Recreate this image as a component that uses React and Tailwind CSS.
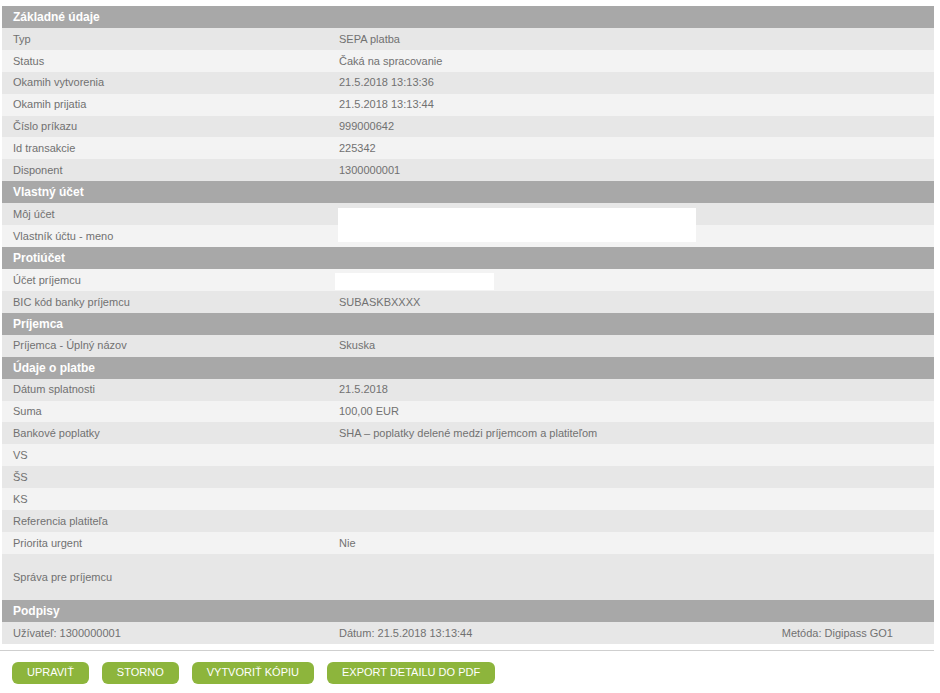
const basic = [
  ["Typ", "SEPA platba"],
  ["Status", "Čaká na spracovanie"],
  ["Okamih vytvorenia", "21.5.2018 13:13:36"],
  ["Okamih prijatia", "21.5.2018 13:13:44"],
  ["Číslo príkazu", "999000642"],
  ["Id transakcie", "225342"],
  ["Disponent", "1300000001"],
];

const payment = [
  ["Dátum splatnosti", "21.5.2018"],
  ["Suma", "100,00 EUR"],
  ["Bankové poplatky", "SHA – poplatky delené medzi príjemcom a platiteľom"],
  ["VS", ""],
  ["ŠS", ""],
  ["KS", ""],
  ["Referencia platiteľa", ""],
  ["Priorita urgent", "Nie"],
];

const Header = ({ title }) => (
  <div className="h-[22px] bg-[#a8a8a8] flex items-center pl-[11px] text-[12px] font-bold text-white">
    {title}
  </div>
);

const Row = ({ label, value, dark }) => (
  <div
    className={`h-[21.9px] flex items-center text-[11px] text-[#717171] ${
      dark ? "bg-[#e7e7e7]" : "bg-[#f3f3f3]"
    }`}
  >
    <div className="w-[337px] pl-[11px] shrink-0">{label}</div>
    <div className="flex-1">{value}</div>
  </div>
);

const Button = ({ children }) => (
  <button className="h-[22px] px-[15px] rounded-[6px] bg-[#8db53c] text-white text-[11px] leading-none">
    {children}
  </button>
);

export default function App() {
  return (
    <div
      className="w-[940px] h-[693px] bg-white pt-[6px]"
      style={{ fontFamily: '"Liberation Sans", Arial, sans-serif' }}
    >
      <div className="ml-[2px] w-[932px]">
        <Header title="Základné údaje" />
        {basic.map(([l, v], i) => (
          <Row key={l} label={l} value={v} dark={i % 2 === 0} />
        ))}

        <Header title="Vlastný účet" />
        <div className="relative">
          <Row label="Môj účet" value="" dark />
          <Row label="Vlastník účtu - meno" value="" />
          {/* masked account */}
          <div className="absolute left-[336px] top-[5px] w-[358px] h-[34px] bg-white" />
        </div>

        <Header title="Protiúčet" />
        <div className="relative">
          <Row label="Účet príjemcu" value="" />
          <div className="absolute left-[333px] top-[4px] w-[159px] h-[17px] bg-white" />
        </div>
        <Row label="BIC kód banky príjemcu" value="SUBASKBXXXX" dark />

        <Header title="Príjemca" />
        <Row label="Príjemca - Úplný názov" value="Skuska" dark />

        <Header title="Údaje o platbe" />
        {payment.map(([l, v], i) => (
          <Row key={l} label={l} value={v} dark={i % 2 === 0} />
        ))}
        <div className="h-[46px] flex items-center bg-[#e7e7e7] text-[11px] text-[#717171] pl-[11px]">
          Správa pre príjemcu
        </div>

        <Header title="Podpisy" />
        <div className="h-[22px] flex items-center bg-[#e7e7e7] text-[11px] text-[#717171]">
          <div className="w-[337px] pl-[11px] shrink-0">Užívateľ: 1300000001</div>
          <div className="flex-1">Dátum: 21.5.2018 13:13:44</div>
          <div className="pr-[41px]">Metóda: Digipass GO1</div>
        </div>
      </div>

      <div className="mt-[6px] w-[934px] h-px bg-[#cfcfcf]" />

      <div className="flex gap-[13px] pl-[12px] mt-[11px]">
        <Button>UPRAVIŤ</Button>
        <Button>STORNO</Button>
        <Button>VYTVORIŤ KÓPIU</Button>
        <Button>EXPORT DETAILU DO PDF</Button>
      </div>
    </div>
  );
}
